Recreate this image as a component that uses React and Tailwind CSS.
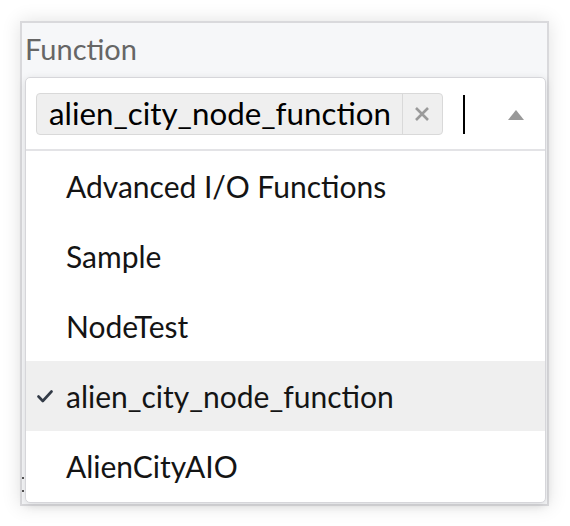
export default function App() {
  const items = [
    { label: "Advanced I/O Functions" },
    { label: "Sample" },
    { label: "NodeTest" },
    { label: "alien_city_node_function", selected: true },
    { label: "AlienCityAIO" },
  ];
  return (
    <div className="w-[570px] h-[526px] bg-white pt-[21px] pl-[20px]" style={{ fontFamily: "Lato, 'Noto Sans', sans-serif" }}>
      <div className="relative w-[529px] h-[485px] border-2 border-[#d9d9dc] bg-[#f6f7f9] shadow-[0_0_18px_rgba(0,0,0,0.12)]">
        <div className="h-[54px] pl-[3px] flex items-center text-[29px] leading-none text-[#666] pb-[4px]">Function</div>
        <div className="absolute left-0 top-[454px] w-[2px] h-[2px] bg-[#555]" />
        <div className="absolute left-0 top-[467px] w-[2px] h-[2px] bg-[#555]" />
        <div className="absolute left-[3px] top-[54px] w-[521px] h-[426px] bg-white border border-[#d6d6da] rounded-[5px] shadow-[0_2px_8px_rgba(0,0,0,0.12)] flex flex-col overflow-hidden">
          <div className="h-[73px] flex items-center pl-[10px] pr-[21px] border-b-2 border-[#e3e3e6] shrink-0">
            <div className="flex items-stretch h-[42px] bg-[#efefef] border border-[#d9d9d9] rounded-[4px]">
              <span className="flex items-center pl-[12px] pr-[11px] text-[31.3px] text-black leading-none">alien_city_node_function</span>
              <span className="flex items-center justify-center w-[40px] border-l border-[#d9d9d9]">
                <svg width="16" height="16" viewBox="0 0 16 16">
                  <path d="M2 2 L14 14 M14 2 L2 14" stroke="#9a9a9a" strokeWidth="2.6" strokeLinecap="butt" />
                </svg>
              </span>
            </div>
            <div className="ml-[20px] w-[2px] h-[39px] bg-black mt-[2px]" />
            <div className="ml-auto w-0 h-0 border-l-[8px] border-r-[8px] border-b-[10px] border-l-transparent border-r-transparent border-b-[#999] mt-[2px]" />
          </div>
          <div className="flex flex-col">
            {items.map((it) => (
              <div
                key={it.label}
                className={`h-[70px] flex items-center text-[30px] text-[#141414] ${it.selected ? "bg-[#efefef]" : ""}`}
              >
                <span className="w-[40px] flex justify-end pr-[13px] shrink-0">
                  {it.selected && (
                    <svg width="16" height="13" viewBox="0 0 16 13" fill="none">
                      <path d="M1.5 6.5 L5.8 11 L14.5 1.5" stroke="#333b47" strokeWidth="2.6" strokeLinecap="round" strokeLinejoin="round" />
                    </svg>
                  )}
                </span>
                <span className="leading-none">{it.label}</span>
              </div>
            ))}
          </div>
        </div>
      </div>
    </div>
  );
}
